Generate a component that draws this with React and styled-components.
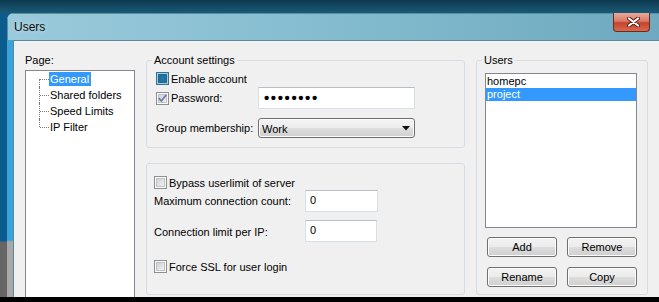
import styled, { createGlobalStyle } from "styled-components";

const GlobalStyle = createGlobalStyle`
  html, body {
    margin: 0;
    padding: 0;
    background: #000;
  }
  body {
    font-family: "Liberation Sans", Arial, sans-serif;
    font-size: 11px;
    color: #000;
  }
  * {
    box-sizing: border-box;
  }
`;

const pages = ["General", "Shared folders", "Speed Limits", "IP Filter"];
const users = ["homepc", "project"];

const CheckMark = () => (
  <svg width="9" height="9" viewBox="0 0 9 9">
    <path
      d="M1.2 4.6 L3.4 7 L7.9 1.2"
      fill="none"
      stroke="#6d80ad"
      strokeWidth="1.8"
      strokeLinecap="round"
      strokeLinejoin="round"
    />
  </svg>
);

const Check = ({ state }) => (
  <StyledCheck $state={state}>
    {state === "checked" && <CheckMark />}
  </StyledCheck>
);

const DropArrow = () => (
  <svg width="8" height="5" viewBox="0 0 8 5">
    <path d="M0 0 H8 L4 4.5 Z" fill="#111" />
  </svg>
);

const CloseGlyph = () => (
  <svg width="13" height="10" viewBox="0 0 13 10">
    <path
      d="M2 1.5 L11 8.5 M11 1.5 L2 8.5"
      stroke="#5b1a10"
      strokeWidth="4"
      strokeLinecap="round"
    />
    <path
      d="M2 1.5 L11 8.5 M11 1.5 L2 8.5"
      stroke="#fff"
      strokeWidth="2.2"
      strokeLinecap="round"
    />
  </svg>
);

const App = () => {
  return (
    <>
      <GlobalStyle />
      <StyledDesktop>
        <StyledWindow>
          <StyledTitleBar>
            <StyledTitle>Users</StyledTitle>
            <StyledClose>
              <CloseGlyph />
            </StyledClose>
          </StyledTitleBar>

          <StyledClient>
            <StyledPageColumn>
              <StyledPageLabel>Page:</StyledPageLabel>
              <StyledTree>
                {pages.map((page, i) => (
                  <StyledTreeItem
                    key={page}
                    $first={i === 0}
                    $last={i === pages.length - 1}
                  >
                    <StyledTreeLabel $selected={i === 0}>{page}</StyledTreeLabel>
                  </StyledTreeItem>
                ))}
              </StyledTree>
            </StyledPageColumn>

            <StyledSettingsColumn>
              <StyledGroup>
                <legend>Account settings</legend>
                <StyledAccountRows>
                  <StyledRow>
                    <StyledCheckLabel>
                      <Check state="focus" />
                      Enable account
                    </StyledCheckLabel>
                  </StyledRow>
                  <StyledRow>
                    <StyledCheckLabel $width={102}>
                      <Check state="checked" />
                      Password:
                    </StyledCheckLabel>
                    <StyledInput $width={157}>
                      <StyledDots>••••••••</StyledDots>
                    </StyledInput>
                  </StyledRow>
                  <StyledRow $top={9}>
                    <StyledFieldLabel $width={102}>Group membership:</StyledFieldLabel>
                    <StyledSelect>
                      Work
                      <DropArrow />
                    </StyledSelect>
                  </StyledRow>
                </StyledAccountRows>
              </StyledGroup>

              <StyledGroup $grow>
                <StyledLimitRows>
                  <StyledRow>
                    <StyledCheckLabel>
                      <Check />
                      Bypass userlimit of server
                    </StyledCheckLabel>
                  </StyledRow>
                  <StyledRow $top={1}>
                    <StyledFieldLabel $width={151}>
                      Maximum connection count:
                    </StyledFieldLabel>
                    <StyledInput $width={73}>0</StyledInput>
                  </StyledRow>
                  <StyledRow $top={8}>
                    <StyledFieldLabel $width={151} $shift={2}>
                      Connection limit per IP:
                    </StyledFieldLabel>
                    <StyledInput $width={72}>0</StyledInput>
                  </StyledRow>
                  <StyledRow $top={18}>
                    <StyledCheckLabel>
                      <Check />
                      Force SSL for user login
                    </StyledCheckLabel>
                  </StyledRow>
                </StyledLimitRows>
              </StyledGroup>
            </StyledSettingsColumn>

            <StyledUsersColumn>
              <StyledGroup $grow>
                <legend>Users</legend>
                <StyledUsersBody>
                  <StyledList>
                    {users.map((user, i) => (
                      <StyledListItem key={user} $selected={i === 1}>
                        {user}
                      </StyledListItem>
                    ))}
                  </StyledList>
                  <StyledButtons>
                    <StyledButton>Add</StyledButton>
                    <StyledButton>Remove</StyledButton>
                    <StyledButton>Rename</StyledButton>
                    <StyledButton>Copy</StyledButton>
                  </StyledButtons>
                </StyledUsersBody>
              </StyledGroup>
            </StyledUsersColumn>
          </StyledClient>
        </StyledWindow>
      </StyledDesktop>
    </>
  );
};

const StyledDesktop = styled.div`
  width: 659px;
  height: 302px;
  overflow: hidden;
  padding: 13px 0 5px 7px;
  background: linear-gradient(
    to bottom,
    #0e3a50 0,
    #1a5a75 13px,
    #0b5b8d 13px,
    #0b5b8d 241px,
    #666 242px,
    #666 297px,
    #000 297px
  );
`;

const StyledWindow = styled.div`
  width: 652px;
  height: 284px;
  display: flex;
  flex-direction: column;
  border-top-left-radius: 7px;
  overflow: hidden;
  background: linear-gradient(
    to bottom,
    #7fb5c9 0,
    #3aa2da 30px,
    #3aa2da 227px,
    #a9a9a9 229px
  );
`;

const StyledTitleBar = styled.div`
  height: 27px;
  display: flex;
  align-items: flex-start;
  background: linear-gradient(to right, #9acadb 0, #86bdd0 45%, #6ea9bf 100%);
  box-shadow: inset 1px 1px 0 #5a8ea3;
`;

const StyledTitle = styled.div`
  padding: 7px 0 0 7px;
  font-size: 12px;
  line-height: 14px;
  color: #0a0a0a;
  text-shadow: 0 0 4px rgba(255, 255, 255, 0.6);
`;

const StyledClose = styled.div`
  margin-left: auto;
  margin-right: 9px;
  width: 37px;
  height: 19px;
  display: flex;
  align-items: center;
  justify-content: center;
  padding-left: 4px;
  border: 1px solid #6b2a1e;
  border-top: none;
  border-radius: 0 0 4px 4px;
  background: linear-gradient(
    to bottom,
    #e9ab9b 0,
    #d97a66 45%,
    #c4432c 55%,
    #d86a4f 100%
  );
`;

const StyledClient = styled.div`
  flex: 1;
  margin-left: 6px;
  display: flex;
  background: #f0f0f0;
  border-top: 1px solid #5c8a9d;
  border-left: 1px solid #5c8a9d;
  min-height: 0;
`;

const StyledPageColumn = styled.div`
  width: 121px;
  display: flex;
  flex-direction: column;
  padding: 13px 0 0 11px;
`;

const StyledPageLabel = styled.div`
  line-height: 13px;
`;

const StyledTree = styled.div`
  margin-top: 3px;
  flex: 1;
  margin-bottom: -10px;
  background: #fff;
  border: 1px solid #828790;
  padding-top: 0;
`;

const StyledTreeItem = styled.div`
  position: relative;
  height: 16px;
  display: flex;
  align-items: center;
  padding-left: 23px;
  &::before {
    content: "";
    position: absolute;
    left: 13px;
    top: ${(p) => (p.$first ? "8px" : "0")};
    bottom: ${(p) => (p.$last ? "8px" : "0")};
    border-left: 1px dotted #7a7a7a;
  }
  &::after {
    content: "";
    position: absolute;
    left: 14px;
    width: 9px;
    top: 8px;
    border-top: 1px dotted #7a7a7a;
  }
`;

const StyledTreeLabel = styled.span`
  display: inline-block;
  line-height: 14px;
  padding: 0 2px 0 1px;
  background: ${(p) => (p.$selected ? "#3399ff" : "transparent")};
  color: ${(p) => (p.$selected ? "#fff" : "#000")};
`;

const StyledSettingsColumn = styled.div`
  width: 319px;
  margin-left: 11px;
  display: flex;
  flex-direction: column;
  gap: 15px;
  padding: 13px 0 2px;
`;

const StyledUsersColumn = styled.div`
  width: 172px;
  margin-left: 11px;
  display: flex;
  flex-direction: column;
  padding: 13px 0 2px;
`;

const StyledGroup = styled.fieldset`
  margin: 0;
  padding: 0;
  min-width: 0;
  border: 1px solid #d5dde3;
  border-radius: 3px;
  flex: ${(p) => (p.$grow ? "1" : "none")};
  legend {
    margin-left: 5px;
    padding: 0 2px;
    line-height: 13px;
    font-size: 11px;
  }
`;

const StyledAccountRows = styled.div`
  display: flex;
  flex-direction: column;
  padding: 5px 0 9px 9px;
`;

const StyledLimitRows = styled.div`
  display: flex;
  flex-direction: column;
  padding: 12px 0 0 7px;
`;

const StyledRow = styled.div`
  display: flex;
  align-items: center;
  margin-top: ${(p) => p.$top || 2}px;
  &:first-child {
    margin-top: 0;
  }
`;

const StyledCheckLabel = styled.label`
  display: flex;
  align-items: center;
  gap: 2px;
  height: 13px;
  width: ${(p) => (p.$width ? `${p.$width}px` : "auto")};
  white-space: nowrap;
`;

const StyledFieldLabel = styled.div`
  width: ${(p) => p.$width}px;
  margin-top: ${(p) => p.$shift || 0}px;
  white-space: nowrap;
`;

const StyledCheck = styled.span`
  width: 13px;
  height: 13px;
  flex: none;
  display: flex;
  align-items: center;
  justify-content: center;
  border: 1px solid ${(p) => (p.$state === "focus" ? "#3c6f8c" : "#8f8f8f")};
  background: ${(p) =>
    p.$state === "focus"
      ? "radial-gradient(circle at 50% 50%, #2a7da6 0, #1f6a91 55%, #2f8ab4 100%)"
      : "linear-gradient(135deg, #c4c6c8 0, #e6e7e8 60%, #f6f6f6 100%)"};
  box-shadow: ${(p) =>
    p.$state === "focus"
      ? "inset 0 0 0 1px #9fd0e6"
      : "inset 0 0 0 1px #fbfbfb, inset 0 0 0 2px #c0c3c6"};
`;

const StyledInput = styled.div`
  width: ${(p) => p.$width}px;
  height: 22px;
  display: flex;
  align-items: center;
  padding: 0 4px 2px;
  background: #fff;
  border: 1px solid #d9dfe6;
  border-top-color: #b9bec5;
`;

const StyledDots = styled.span`
  font-size: 15px;
  font-weight: bold;
  letter-spacing: 1.6px;
  line-height: 14px;
  padding: 1px 0 0 1px;
`;

const StyledSelect = styled.div`
  width: 157px;
  height: 20px;
  display: flex;
  align-items: center;
  justify-content: space-between;
  padding: 1px 4px 0 3px;
  border: 1px solid #707070;
  border-radius: 3px;
  background: linear-gradient(
    to bottom,
    #f4f4f4 0,
    #ececec 50%,
    #dedede 51%,
    #d0d0d0 100%
  );
  box-shadow: inset 0 0 0 1px #fbfbfb;
`;

const StyledUsersBody = styled.div`
  display: flex;
  flex-direction: column;
  padding: 6px 10px 0 8px;
`;

const StyledList = styled.div`
  height: 155px;
  background: #fff;
  border: 1px solid #828790;
  padding-top: 1px;
`;

const StyledListItem = styled.div`
  line-height: 13px;
  padding-left: 1px;
  background: ${(p) => (p.$selected ? "#3399ff" : "transparent")};
  color: ${(p) => (p.$selected ? "#fff" : "#000")};
`;

const StyledButtons = styled.div`
  margin: 9px 0 0 2px;
  display: grid;
  grid-template-columns: 70px 70px;
  grid-auto-rows: 20px;
  gap: 10px;
`;

const StyledButton = styled.button`
  font: inherit;
  color: #000;
  padding: 0;
  border: 1px solid #707070;
  border-radius: 3px;
  background: linear-gradient(
    to bottom,
    #f3f3f3 0,
    #ebebeb 50%,
    #dddddd 51%,
    #cfcfcf 100%
  );
  box-shadow: inset 0 0 0 1px #fcfcfc;
`;

export default App;
